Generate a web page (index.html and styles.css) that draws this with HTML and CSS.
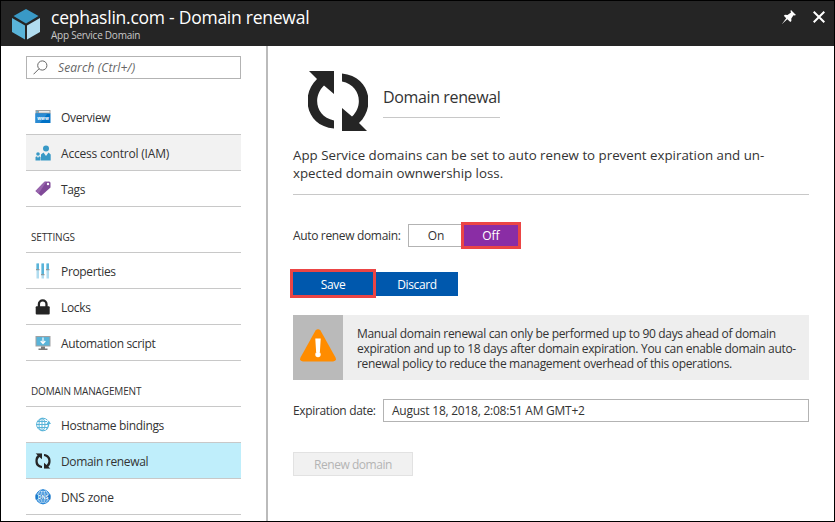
FILE: index.html
```
<!DOCTYPE html>
<html lang="en">
<head>
<meta charset="utf-8">
<title>Domain renewal</title>
<link rel="stylesheet" href="styles.css">
</head>
<body>
<svg width="0" height="0" class="defs">
  <symbol id="renew" viewBox="0 0 60 60">
    <path d="M1 0H26V23L16 14.500C4 26 8 46 26 49.500V57.500C-2 55-8 24 9 8Z"/>
    <path d="M59 60H34V37L44 45.500C56 34 52 14 34 10.500V2.500C62 5 68 36 51 52Z"/>
  </symbol>
</svg>
<div class="window">
  <header class="header">
    <svg class="cube" width="28" height="31" viewBox="0 0 28 31">
      <path fill="#3999c6" d="M14 0L26.500 7 14 14.500 1.500 7Z"/>
      <path fill="#59b4d9" d="M0 9L13 16.500V30.500L0 23Z"/>
      <path fill="#b0dcef" d="M28 9L15 16.500V30.500L28 23Z"/>
    </svg>
    <div class="titles">
      <h1>cephaslin.com - Domain renewal</h1>
      <p>App Service Domain</p>
    </div>
    <svg class="pin" width="14" height="14" viewBox="0 0 14 14"><path fill="#fff" d="M9 0L14 5 12.500 5.500 11.500 5.200 9.300 8.500 9.400 11 8.300 12 5.300 9.300 0 14 4.200 8.200 1.800 5.700 3 4.800 5.500 5 9 2.600 8.500 1Z"/></svg>
    <svg class="close" width="12" height="12" viewBox="0 0 12 12"><path stroke="#fff" stroke-width="2" d="M.7.700L11.300 11.300M11.300.700L.7 11.300"/></svg>
  </header>
  <div class="body">
    <nav class="side">
      <div class="search">
        <svg width="15" height="15" viewBox="0 0 15 15" fill="none" stroke="#666"><circle cx="9.300" cy="5.500" r="4.600"/><path d="M6 8.800L.5 14.300"/></svg>
        <span>Search (Ctrl+/)</span>
      </div>
      <ul class="menu first">
        <li>
          <svg width="16" height="16" viewBox="0 0 16 16"><path fill="#a0a1a2" d="M.5 1h15v4H.5z"/><path fill="#fff" d="M4 2.200h10.500v1.300H4z"/><path fill="#59b4d9" d="M1.500 2h1.500v1.500H1.500z"/><path fill="#0072c6" d="M.5 4.500h15V14H.5z"/><path fill="#2b8bd3" d="M.5 4.500h12L5 14H.5z"/><text x="8" y="10.500" class="www">www</text></svg>
          <span>Overview</span></li>
        <li class="hover">
          <svg width="16" height="16" viewBox="0 0 16 16" fill="#3999c6"><circle cx="11" cy="3.500" r="3"/><path d="M6 15.500V9.500L8.500 7.500 11 11 13.500 7.500 15.700 9.500V15.500Z"/><circle cx="3" cy="9" r="1.800"/><path d="M.5 15.500V12L2 11.300 3 13 4 11.300 5.500 12V15.500Z"/></svg>
          <span class="wide">Access control (IAM)</span></li>
        <li>
          <svg width="16" height="16" viewBox="0 0 16 16"><path fill="#804998" d="M9.500.700L14 .5Q15.500.500 15.500 2V6.500L6 15 .5 10Z"/><path fill="#9865ad" d="M9.500.700L11.500.600 3.500 12.800.500 10Z"/><circle cx="13" cy="3" r="1.200" fill="#fff"/></svg>
          <span>Tags</span></li>
      </ul>
      <h2>SETTINGS</h2>
      <ul class="menu">
        <li>
          <svg width="16" height="16" viewBox="0 0 16 16"><path fill="#b0dcef" d="M1.500 .5h2.500v15H1.500zM6.500 .5h2.500v15H6.500zM11.500 .5h2.500v15H11.500z"/><path fill="#59b4d9" d="M1.500 .5h2.500V6H1.500zM6.500 .5h2.500V11H6.500zM11.500 .5h2.500V6H11.500z"/><path fill="#8a9a9f" d="M1 6h3.500v1.300H1zM6 11h3.500v1.300H6zM11 6h3.500v1.300H11z"/></svg>
          <span>Properties</span></li>
        <li>
          <svg width="16" height="16" viewBox="0 0 16 16"><path fill="none" stroke="#252525" stroke-width="2.300" d="M3.900 8V5.200a3.800 3.800 0 0 1 7.600 0V8"/><rect x=".7" y="7.200" width="14" height="8.300" rx="1" fill="#252525"/></svg>
          <span>Locks</span></li>
        <li>
          <svg width="16" height="16" viewBox="0 0 16 16"><path fill="#a0a1a2" d="M.5 1h15v10.500H.5z"/><path fill="#59b4d9" d="M1.500 2h13v8.500h-13z"/><path fill="#7a7a7a" d="M6 11.500h4v2h2.500V15h-9v-1.500H6z"/><path fill="none" stroke="#fff" stroke-width="1.200" d="M8 2.500V8.500M5.700 6L8 8.500 10.300 6"/></svg>
          <span>Automation script</span></li>
      </ul>
      <h2>DOMAIN MANAGEMENT</h2>
      <ul class="menu">
        <li>
          <svg width="16" height="16" viewBox="0 0 16 16" fill="none" stroke="#59b4d9"><path d="M12.500 3.200A6.300 6.300 0 1 0 12.500 11.800"/><ellipse cx="7" cy="7.500" rx="3" ry="6.300"/><path d="M7 1v13M1 7.500h12M2 4.500h10M2 10.500h10"/><path stroke-width="1.300" d="M11.500 11.800Q13.700 10.500 13.700 6"/><path fill="#59b4d9" stroke="none" d="M11.500 7L13.700 3.500 16 7Z"/></svg>
          <span>Hostname bindings</span></li>
        <li class="active">
          <svg width="16" height="16" viewBox="0 0 16 16"><use href="#renew" x=".3" y=".3" width="15.400" height="15.400" fill="#252525"/></svg>
          <span>Domain renewal</span></li>
        <li>
          <svg width="16" height="16" viewBox="0 0 16 16"><g fill="none" stroke="#2b88d8"><circle cx="8" cy="7.800" r="7"/><ellipse cx="8" cy="7.800" rx="3.500" ry="7"/><path d="M8 1v14M2 4h12M2 12h12"/></g><path fill="#1b78c8" d="M.5 5.500h15v5H.5z"/><text x="8" y="9.800" class="dns">DNS</text></svg>
          <span class="wide">DNS zone</span></li>
      </ul>
    </nav>
    <main class="main">
      <div class="hero">
        <svg width="60" height="60"><use href="#renew" width="60" height="60" fill="#252525"/></svg>
        <h3>Domain renewal</h3>
      </div>
      <p class="intro">App Service domains can be set to auto renew to prevent expiration and un-<br>xpected domain ownwership loss.</p>
      <div class="row toggle-row">
        <label>Auto renew domain:</label>
        <div class="toggle"><span class="on">On</span><span class="off">Off</span></div>
      </div>
      <div class="actions"><button class="save">Save</button><button class="discard">Discard</button></div>
      <div class="alert">
        <div class="alert-icon"><svg width="36" height="33" viewBox="0 0 36 33"><path fill="#ff8c00" d="M15.500 1.500Q18-1 20.500 1.500L35.500 28.500Q37 32 33 32.500H3Q-1 32 .5 28.500Z"/><path fill="#fff" d="M15.300 9.500h5.400l-.8 13.500h-3.800z"/><circle cx="18" cy="25.500" r="2.700" fill="#fff"/></svg></div>
        <p>Manual domain renewal can only be performed up to 90 days ahead of domain<br>expiration and up to 18 days after domain expiration. You can enable domain auto-<br>renewal policy to reduce the management overhead of this operations.</p>
      </div>
      <div class="row date-row">
        <label>Expiration date:</label>
        <div class="field">August 18, 2018, 2:08:51 AM GMT+2</div>
      </div>
      <button class="renew" disabled>Renew domain</button>
    </main>
  </div>
</div>
</body>
</html>
```
FILE: styles.css
```
* { box-sizing: border-box; margin: 0; padding: 0; }
body { width: 835px; height: 522px; overflow: hidden; background: #fff; color: #333; font: 12px/16px "Open Sans", "Noto Sans", sans-serif; }
.defs { display: block; }
span, label, h1, h2, h3, p { white-space: nowrap; }
.window { width: 835px; height: 522px; border: 1px solid #000; display: flex; flex-direction: column; overflow: hidden; }
.header { flex: none; height: 45px; background: #252525; color: #fff; display: flex; align-items: flex-start; padding: 8px 9px 0 11px; }
.titles { margin: -4px 0 0 11px; flex: 1; }
.header h1 { font-size: 17.500px; line-height: 24px; font-weight: 400; letter-spacing: -.25px; }
.header p { font-size: 10px; line-height: 12px; color: #c8c8c8; letter-spacing: -.25px; }
.pin { margin: 1px 17px 0 0; }
.close { margin: 2px 0 0; }
.body { flex: 1; display: flex; min-height: 0; }
.side { width: 267px; flex: none; border-right: 2px solid #bbb; padding: 10px 25px 0; overflow: hidden; }
.search { width: 215px; height: 23px; border: 1px solid #b3b3b3; display: flex; align-items: center; padding-left: 6px; color: #666; font-style: italic; letter-spacing: .1px; }
.search svg { margin-top: -1px; }
.search span { margin: 1px 0 0 10px; }
.menu { list-style: none; width: 215px; letter-spacing: -.34px; }
.menu.first { margin-top: 20px; }
.menu li { height: 36px; border-bottom: 1px solid #c8c8c8; display: flex; align-items: center; padding-left: 9px; }
.menu span { padding-top: 2px; }
.menu .wide { letter-spacing: -.2px; }
.menu svg { margin: 1px 10px 0 0; flex: none; }
.menu .hover { background: #f2f2f2; }
.menu .active { background: #bfeefb; }
.side h2 { width: 215px; height: 46px; border-bottom: 1px solid #c8c8c8; padding: 22px 0 0 5px; font-size: 10px; font-weight: 400; line-height: 17px; letter-spacing: -.15px; }
.www { font: 700 4.500px "Open Sans", sans-serif; fill: #fff; text-anchor: middle; letter-spacing: 0; }
.dns { font: 700 5px "Open Sans", sans-serif; fill: #fff; text-anchor: middle; letter-spacing: 0; }
.main { flex: 1; padding: 25px 25px 0 25px; }
.hero { display: flex; height: 60px; padding-left: 15px; }
.hero h3 { width: 117px; height: 47px; margin-left: 15px; border-bottom: 1px solid #c8c8c8; font-size: 16px; font-weight: 400; line-height: 22px; padding-top: 15px; letter-spacing: -.37px; }
.intro { margin-top: 15px; height: 49px; border-bottom: 1px solid #c8c8c8; font-size: 13.300px; line-height: 18px; }
.row { display: flex; align-items: center; }
.row label { letter-spacing: -.34px; padding-top: 1px; }
.toggle-row { margin-top: 27px; height: 27px; }
.toggle { display: flex; align-items: center; margin-left: auto; margin-right: 288px; }
.on { width: 53px; height: 23px; border: 1px solid #b3b3b3; border-right: 0; text-align: center; line-height: 21px; padding-left: 2px; }
.off { width: 60px; height: 27px; border: 3px solid #eb4545; background: #8a2da5; color: #fff; text-align: center; line-height: 22px; }
button { font: inherit; border: 0; }
.actions { display: flex; align-items: center; margin: 20px 0 0 -3px; height: 29px; }
.save, .discard { background: #0058ad; color: #fff; letter-spacing: -.35px; padding-top: 2px; }
.save { width: 86px; height: 29px; border: 3px solid #eb4545; }
.discard { width: 82px; height: 24px; }
.alert { margin-top: 17px; height: 65px; background: #eee; display: flex; }
.alert-icon { width: 50px; background: #bababa; padding: 14px 0 0 7px; }
.alert p { padding: 11px 0 0 14px; line-height: 15px; letter-spacing: -.32px; }
.date-row { margin-top: 19px; height: 23px; }
.field { margin-left: auto; width: 426px; height: 23px; border: 1px solid #b3b3b3; line-height: 22px; padding-left: 8px; letter-spacing: -.24px; }
.renew { display: block; margin-top: 30px; width: 120px; height: 24px; padding-top: 1px; background: #f1f1f1; border: 1px solid #e2e2e2; color: #b4b4b4; letter-spacing: -.45px; }
```
